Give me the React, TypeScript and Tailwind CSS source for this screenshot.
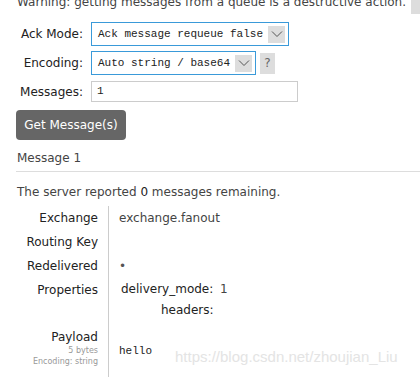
import React from "react";

const sans = { fontFamily: "Verdana, 'DejaVu Sans', sans-serif" };

function Chevron() {
  return (
    <svg width="12" height="8" viewBox="0 0 12 8" fill="none">
      <path d="M1 1.5 L6 6.5 L11 1.5" stroke="#555" strokeWidth="1" />
    </svg>
  );
}

function Select({ text, width }: { text: string; width: string }) {
  return (
    <div className={`flex h-[24px] items-center border border-[#3a9ad9] bg-white pl-[6px] pr-[3px] ${width}`}>
      <span className="flex-1 whitespace-nowrap font-['Liberation_Mono',monospace] text-[11px] text-[#222]">{text}</span>
      <span className="flex h-[17px] w-[17px] items-center justify-center bg-[#dddddd]">
        <Chevron />
      </span>
    </div>
  );
}

export default function App() {
  return (
    <div className="h-[377px] w-[420px] overflow-hidden bg-white pl-[16px] text-[12px] text-[#222]" style={sans}>
      <div className="relative -mt-[6px] flex h-[16px] items-center whitespace-nowrap pl-[1px] text-[#444]">
        Warning: getting messages from a queue is a destructive action.
        <span className="absolute left-[395px] top-0 h-[20px] w-[20px] bg-[#ddd]" />
      </div>
      <div className="mt-[12px] flex flex-col">
        <div className="flex h-[24px] items-center">
          <span className="w-[67px] whitespace-nowrap text-right text-[12px]">Ack Mode:</span>
          <div className="ml-[8px]">
            <Select text="Ack message requeue false" width="w-[198px]" />
          </div>
        </div>
        <div className="mt-[6px] flex h-[22px] items-center">
          <span className="w-[67px] whitespace-nowrap text-right text-[12px]">Encoding:</span>
          <div className="ml-[8px] flex items-center">
            <Select text="Auto string / base64" width="w-[165px] h-[22px]" />
            <span className="ml-[4px] flex h-[21px] w-[15px] items-center justify-center bg-[#ddd] text-[12px] text-[#666]">?</span>
          </div>
        </div>
        <div className="mt-[7px] flex h-[21px] items-center">
          <span className="w-[67px] whitespace-nowrap text-right text-[12px]">Messages:</span>
          <div className="ml-[8px] flex h-[21px] w-[207px] items-center border border-[#ccc] pl-[5px] font-['Liberation_Mono',monospace] text-[11px]">
            1
          </div>
        </div>
      </div>
      <button className="mt-[8px] flex h-[30px] w-[110px] items-center justify-center rounded-[4px] bg-[#666] text-[12px] text-white" style={sans}>
        Get Message(s)
      </button>
      <div className="mt-[9px] border-b border-[#ddd] pb-[4px] pl-[1px] text-[12px] text-[#444]">Message 1</div>
      <div className="mt-[11px] pl-[1px] text-[12px] text-[#444]">
        The server reported <span className="text-[#222]">0</span> messages remaining.
      </div>
      <div className="mt-[5px] grid grid-cols-[93px_1fr]">
        <div className="flex h-[24px] items-center justify-end whitespace-nowrap border-r border-[#ccc] pr-[10px] text-[12px]">Exchange</div>
        <div className="flex h-[24px] items-center pl-[10px] text-[12px] text-[#444]">exchange.fanout</div>
        <div className="flex h-[24px] items-center justify-end whitespace-nowrap border-r border-[#ccc] pr-[10px] text-[12px]">Routing Key</div>
        <div className="h-[24px]" />
        <div className="flex h-[24px] items-center justify-end whitespace-nowrap border-r border-[#ccc] pr-[10px] text-[12px]">Redelivered</div>
        <div className="flex h-[24px] items-center pl-[10px] text-[12px] text-[#555]">•</div>
        <div className="flex h-[45px] justify-end whitespace-nowrap border-r border-[#ccc] pr-[10px] pt-[3px] text-[12px]">Properties</div>
        <div className="h-[45px] pl-[12px] pt-[3px] text-[12px]">
          <div className="grid grid-cols-[90px_auto] gap-y-[4px] leading-[17px]">
            <span className="whitespace-nowrap text-right">delivery_mode:</span>
            <span className="pl-[9px] text-[#444]">1</span>
            <span className="pl-[40px] text-right">headers:</span>
            <span />
          </div>
        </div>
        <div className="flex h-[60px] flex-col items-end whitespace-nowrap border-r border-[#ccc] pr-[10px] pt-[6px]">
          <span className="text-[12px] leading-[16px]">Payload</span>
          <span className="text-[8px] leading-[11px] text-[#999]">5 bytes</span>
          <span className="text-[8px] leading-[11px] text-[#999]">Encoding: string</span>
        </div>
        <div className="relative h-[60px] pl-[10px] pt-[20px] font-['Liberation_Mono',monospace] text-[11px]">
          hello
          <span className="absolute left-[66px] top-[23px] whitespace-nowrap font-['Liberation_Sans',sans-serif] text-[15px] text-[#e4e4e4]">
            https://blog.csdn.net/zhoujian_Liu
          </span>
        </div>
      </div>
    </div>
  );
}
